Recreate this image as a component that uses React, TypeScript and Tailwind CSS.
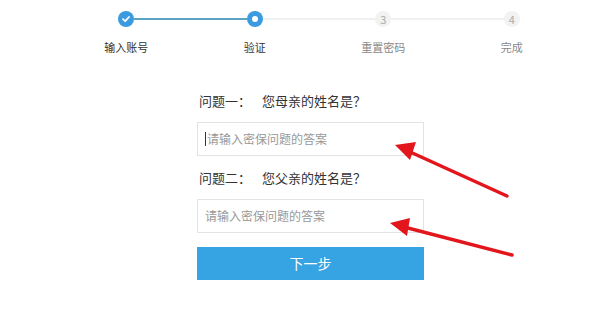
import React from "react";

const font = { fontFamily: '"Microsoft YaHei", "Noto Sans CJK SC", "Noto Sans", sans-serif' };

function Step({ idx, label, state, leftColor, rightColor }: { idx: number; label: string; state: "done" | "current" | "todo"; leftColor: string; rightColor: string }) {
  return (
    <div className="flex flex-col items-center">
      <div className="flex w-full items-center">
        <div className={`h-[2px] flex-1 ${leftColor}`} />
        {state === "done" && (
          <div className="flex h-4 w-4 items-center justify-center rounded-full bg-[#3c9be0]">
            <svg width="10" height="10" viewBox="0 0 10 10">
              <path d="M2 5.2 L4.2 7.2 L8 3" stroke="white" strokeWidth="1.8" fill="none" strokeLinecap="round" strokeLinejoin="round" />
            </svg>
          </div>
        )}
        {state === "current" && (
          <div className="flex h-4 w-4 items-center justify-center rounded-full bg-[#3c9be0]">
            <div className="h-[6px] w-[6px] rounded-full bg-white" />
          </div>
        )}
        {state === "todo" && (
          <div className="flex h-4 w-4 items-center justify-center rounded-full bg-[#f2f2f2] text-[11px] leading-none text-[#aaa]">
            {idx}
          </div>
        )}
        <div className={`h-[2px] flex-1 ${rightColor}`} />
      </div>
      <div className={`mt-[12px] text-[11px] leading-[16px] ${state === "todo" ? "text-[#888]" : "text-[#333]"}`}>{label}</div>
    </div>
  );
}

export default function App() {
  return (
    <div className="relative h-[310px] w-[600px] overflow-hidden bg-white" style={font}>
      <div className="ml-[62px] grid w-[514px] grid-cols-4 pt-[11px]">
        <Step idx={1} label="输入账号" state="done" leftColor="bg-transparent" rightColor="bg-[#5aa3c3]" />
        <Step idx={2} label="验证" state="current" leftColor="bg-[#5aa3c3]" rightColor="bg-[#f0f0f0]" />
        <Step idx={3} label="重置密码" state="todo" leftColor="bg-[#f0f0f0]" rightColor="bg-[#f0f0f0]" />
        <Step idx={4} label="完成" state="todo" leftColor="bg-[#f0f0f0]" rightColor="bg-transparent" />
      </div>

      <div className="ml-[197px] mt-[36px] flex w-[227px] flex-col">
        <div className="flex pl-[2px] text-[13px] leading-[20px] text-[#333]">
          <span className="w-[63px]">问题一：</span>
          <span>您母亲的姓名是？</span>
        </div>
        <div className="mt-[11px] flex h-[34px] items-center border border-[#e3e3e3] pl-[7px] text-[12px] text-[#999]">
          <span className="mr-[1px] h-[14px] w-px bg-[#333]" />
          请输入密保问题的答案
        </div>
        <div className="mt-[12px] flex pl-[2px] text-[13px] leading-[20px] text-[#333]">
          <span className="w-[63px]">问题二：</span>
          <span>您父亲的姓名是？</span>
        </div>
        <div className="mt-[11px] flex h-[34px] items-center border border-[#e3e3e3] pl-[7px] text-[12px] text-[#999]">
          请输入密保问题的答案
        </div>
        <div className="mt-[14px] flex h-[33px] items-center justify-center bg-[#36a3e3] text-[14px] text-white">
          下一步
        </div>
      </div>

      <svg className="pointer-events-none absolute left-0 top-0" width="600" height="310" viewBox="0 0 600 310">
        <line x1="507" y1="196" x2="408" y2="151" stroke="#e3161d" strokeWidth="3.5" strokeLinecap="round" />
        <polygon points="395,145 416,142 410,160" fill="#e3161d" />
        <line x1="512" y1="255" x2="404" y2="227" stroke="#e3161d" strokeWidth="3.5" strokeLinecap="round" />
        <polygon points="390,223 410,218 407,236" fill="#e3161d" />
      </svg>
    </div>
  );
}
